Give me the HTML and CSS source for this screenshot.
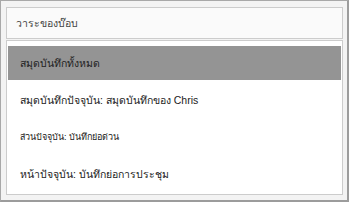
FILE: index.html
```html
<!DOCTYPE html>
<html lang="th">
<head>
  <meta charset="utf-8">
  <link rel="stylesheet" href="styles.css">
</head>
<body>
  <div class="panel">
    <div class="search">วาระของบ๊อบ</div>
    <div class="list">
      <div class="item selected">สมุดบันทึกทั้งหมด</div>
      <div class="item">สมุดบันทึกปัจจุบัน: สมุดบันทึกของ Chris</div>
      <div class="item small">ส่วนปัจจุบัน: บันทึกย่อด่วน</div>
      <div class="item">หน้าปัจจุบัน: บันทึกย่อการประชุม</div>
    </div>
  </div>
</body>
</html>
```

FILE: styles.css
```css
body {
    margin: 0;
    padding: 0;
    font-family: Tahoma, "Liberation Sans", "Noto Sans", sans-serif;
}
.panel {
    box-sizing: border-box;
    width: 349px;
    height: 202px;
    display: flex;
    flex-direction: column;
    background: #f3f3f3;
    border-left: 1px solid #a8a8a8;
    border-top: 1px solid #a8a8a8;
    border-right: 2px solid #9c9c9c;
    border-bottom: 2px solid #9c9c9c;
    padding: 6px 4px 7px 5px;
}
.search {
    box-sizing: border-box;
    height: 32px;
    line-height: 30px;
    padding-left: 9px;
    background: #fafafa;
    border: 1px solid #cccccc;
    color: #444;
    font-size: 10.5px;
}
.list {
    flex: 1;
    margin-top: 1px;
    padding: 5px 1px 0 1px;
    background: #fff;
    border: 1px solid #cccccc;
}
.item {
    height: 34px;
    line-height: 34px;
    margin-bottom: 3px;
    padding-left: 12px;
    color: #222;
    font-size: 10.5px;
}
.item.small {
    font-size: 9px;
}
.item.selected {
    background: #949494;
}
```
